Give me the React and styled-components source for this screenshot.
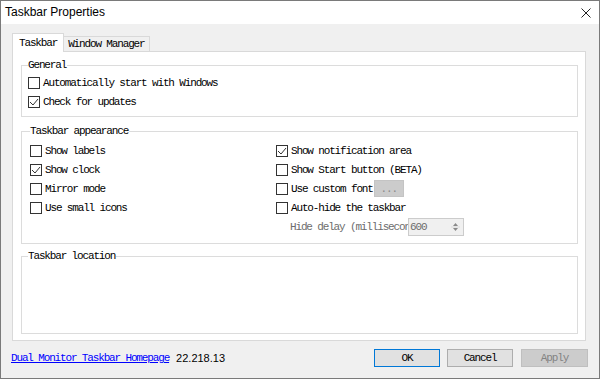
import React from "react";
import styled, { createGlobalStyle } from "styled-components";

const Global = createGlobalStyle`
  html, body { margin: 0; padding: 0; background: #ffffff; }
  #root { width: 600px; height: 379px; }
`;

const UI_FONT = `"Liberation Mono", "DejaVu Sans Mono", monospace`;

const Window = styled.div`
  box-sizing: border-box;
  width: 600px;
  height: 379px;
  border: 1px solid #7a7a7a;
  background: #f0f0f0;
  display: flex;
  flex-direction: column;
  font-family: ${UI_FONT};
  font-size: 11px;
  letter-spacing: -1.15px;
  color: #000;
  overflow: hidden;
`;

const TitleBar = styled.div`
  height: 23px;
  flex: none;
  background: #ffffff;
  display: flex;
  align-items: center;
  justify-content: space-between;
  padding: 0 8px 0 4px;
`;

const TitleText = styled.span`
  font-family: "Liberation Sans", Arial, sans-serif;
  font-size: 12px;
  letter-spacing: 0;
  color: #000;
  line-height: 23px;
`;

const CloseIcon = styled.svg`
  width: 10px;
  height: 10px;
  display: block;
`;

const Content = styled.div`
  flex: 1;
  display: flex;
  flex-direction: column;
  padding: 10px 11px 0 11px;
`;

const TabStrip = styled.div`
  display: flex;
  align-items: flex-end;
  height: 18px;
  position: relative;
  z-index: 1;
  margin-bottom: -1px;
`;

const Tab = styled.div`
  box-sizing: border-box;
  height: ${(p) => (p.$active ? "19px" : "16px")};
  padding: 0 ${(p) => (p.$active ? "6px" : "4px")};
  background: ${(p) => (p.$active ? "#ffffff" : "#f0f0f0")};
  border: 1px solid #d9d9d9;
  border-bottom: ${(p) => (p.$active ? "none" : "1px solid #d9d9d9")};
  ${(p) => !p.$active && "border-left: none;"}
  display: flex;
  align-items: center;
  padding-bottom: ${(p) => (p.$active ? "1px" : "0")};
  white-space: nowrap;
`;

const Panel = styled.div`
  box-sizing: border-box;
  margin-right: 2px;
  background: #ffffff;
  border: 1px solid #d9d9d9;
  padding: 7px 7px 6px 8px;
  display: flex;
  flex-direction: column;
`;

const Group = styled.fieldset`
  margin: ${(p) => p.$mt || 0}px 0 0 0;
  padding: ${(p) => p.$pt || 0}px 6px ${(p) => p.$pb || 0}px ${(p) => p.$pl || 6}px;
  border: 1px solid #dcdcdc;
  min-width: 0;
`;

const Legend = styled.legend`
  padding: 0 1px 0 0;
  margin-left: 0;
  line-height: 12px;
  height: 12px;
  color: #000;
`;

const Columns = styled.div`
  display: grid;
  grid-template-columns: 246px 1fr;
`;

const Column = styled.div`
  display: flex;
  flex-direction: column;
`;

const Row = styled.label`
  display: flex;
  align-items: center;
  height: 19px;
  gap: 3px;
  white-space: nowrap;
`;

const Box = styled.span`
  box-sizing: border-box;
  width: 12px;
  height: 12px;
  border: 1px solid #333333;
  background: #ffffff;
  display: flex;
  align-items: center;
  justify-content: center;
  flex: none;
`;

const FontButton = styled.span`
  box-sizing: border-box;
  width: 30px;
  height: 17px;
  margin-left: -2px;
  background: #cccccc;
  border: 1px solid #c4c4c4;
  color: #8a8a8a;
  display: flex;
  align-items: center;
  justify-content: center;
`;

const DelayRow = styled.div`
  display: flex;
  align-items: center;
  height: 20px;
  padding-left: 14px;
`;

const DelayLabel = styled.span`
  width: 118px;
  overflow: hidden;
  white-space: nowrap;
  color: #6d6d6d;
`;

const Spin = styled.div`
  box-sizing: border-box;
  width: 56px;
  height: 18px;
  border: 1px solid #cccccc;
  background: #f0f0f0;
  display: flex;
  align-items: center;
  justify-content: space-between;
  color: #6d6d6d;
  padding-left: 1px;
`;

const SpinArrows = styled.svg`
  width: 15px;
  height: 16px;
  display: block;
`;

const Filler = styled.div`
  height: ${(p) => p.$h}px;
`;

const Footer = styled.div`
  display: flex;
  align-items: center;
  margin: 8px 0 0 -1px;
`;

const Link = styled.a`
  color: #0000ff;
  text-decoration: underline;
  cursor: pointer;
`;

const Version = styled.span`
  margin-left: 7px;
  font-family: "Liberation Sans", Arial, sans-serif;
  font-size: 11px;
  letter-spacing: 0;
  color: #000;
`;

const Buttons = styled.div`
  margin-left: auto;
  display: flex;
  gap: 7px;
`;

const Button = styled.button`
  box-sizing: border-box;
  width: ${(p) => p.$w || 66}px;
  height: 18px;
  margin-left: ${(p) => p.$ml || 0}px;
  padding: 0;
  font-family: ${UI_FONT};
  font-size: 11px;
  letter-spacing: -1.15px;
  background: ${(p) => (p.$disabled ? "#cccccc" : "#e1e1e1")};
  border: 1px solid
    ${(p) => (p.$primary ? "#0078d7" : p.$disabled ? "#bfbfbf" : "#adadad")};
  color: ${(p) => (p.$disabled ? "#838383" : "#000")};
  display: flex;
  align-items: center;
  justify-content: center;
`;

const Check = ({ checked }) => (
  <Box>
    {checked && (
      <svg width="10" height="10" viewBox="0 0 10 10">
        <polyline
          points="1,5 4,8 9,2"
          fill="none"
          stroke="#333"
          strokeWidth="1"
        />
      </svg>
    )}
  </Box>
);

const Option = ({ checked, children, extra }) => (
  <Row>
    <Check checked={checked} />
    <span>{children}</span>
    {extra}
  </Row>
);

export default function App() {
  return (
    <>
      <Global />
      <Window>
        <TitleBar>
          <TitleText>Taskbar Properties</TitleText>
          <CloseIcon viewBox="0 0 10 10">
            <path d="M0.5 0.5 L9.5 9.5 M9.5 0.5 L0.5 9.5" stroke="#222" strokeWidth="1" />
          </CloseIcon>
        </TitleBar>
        <Content>
          <TabStrip>
            <Tab $active>Taskbar</Tab>
            <Tab>Window Manager</Tab>
          </TabStrip>
          <Panel>
            <Group $pt={2} $pb={5} $pl={6}>
              <Legend>General</Legend>
              <Option>Automatically start with Windows</Option>
              <Option checked>Check for updates</Option>
            </Group>
            <Group $mt={8} $pt={4} $pb={6} $pl={8}>
              <Legend>Taskbar appearance</Legend>
              <Columns>
                <Column>
                  <Option>Show labels</Option>
                  <Option checked>Show clock</Option>
                  <Option>Mirror mode</Option>
                  <Option>Use small icons</Option>
                </Column>
                <Column>
                  <Option checked>Show notification area</Option>
                  <Option>Show Start button (BETA)</Option>
                  <Option extra={<FontButton>...</FontButton>}>Use custom font</Option>
                  <Option>Auto-hide the taskbar</Option>
                  <DelayRow>
                    <DelayLabel>Hide delay (milliseconds)</DelayLabel>
                    <Spin>
                      <span>600</span>
                      <SpinArrows viewBox="0 0 15 16">
                        <path d="M5 7 L7.5 4 L10 7 Z" fill="#8a8a8a" />
                        <path d="M5 9 L7.5 12 L10 9 Z" fill="#8a8a8a" />
                        <line x1="3" y1="8" x2="12" y2="8" stroke="#dadada" strokeWidth="1" />
                      </SpinArrows>
                    </Spin>
                  </DelayRow>
                </Column>
              </Columns>
            </Group>
            <Group $mt={6} $pl={6}>
              <Legend>Taskbar location</Legend>
              <Filler $h={71} />
            </Group>
          </Panel>
          <Footer>
            <Link>Dual Monitor Taskbar Homepage</Link>
            <Version>22.218.13</Version>
            <Buttons>
              <Button $primary>OK</Button>
              <Button>Cancel</Button>
              <Button $disabled $w={67} $ml={1}>Apply</Button>
            </Buttons>
          </Footer>
        </Content>
      </Window>
    </>
  );
}
